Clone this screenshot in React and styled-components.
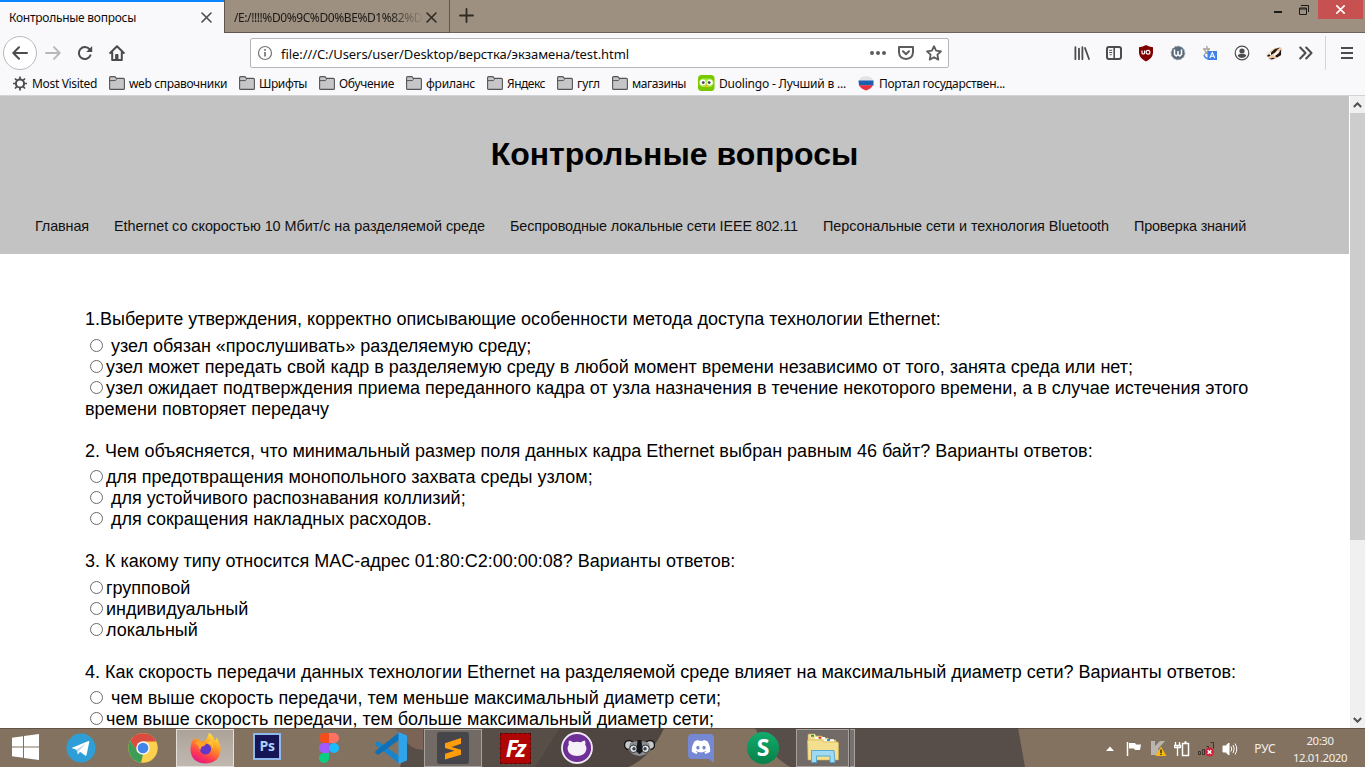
import React from 'react';
import styled, { createGlobalStyle, css } from 'styled-components';
import { FaDiscord } from 'react-icons/fa';

const GlobalStyle = createGlobalStyle`
  * { box-sizing: border-box; }
  body { margin: 0; overflow: hidden; }
`;

const UI = '"Noto Sans", "Open Sans", sans-serif';
const ARIAL = '"Liberation Sans", Arial, sans-serif';

const Desktop = styled.div`
  width: 1365px; height: 767px; display: flex; flex-direction: column;
  overflow: hidden; background: #fff; font-family: ${UI}; font-size: 12px; color: #0c0c0d;
`;
const Text = styled.span`
  white-space: pre; letter-spacing: ${p => p.$ls || 0}px;
`;

/* ---------- tab strip ---------- */
const TabStrip = styled.header`
  height: 33px; flex: none; display: flex; background: #9e9081;
`;
const ActiveTab = styled.div`
  width: 224px; height: 33px; border-top: 2px solid #0a84ff; background: #f9f9fb;
  display: flex; align-items: center; justify-content: space-between; padding: 0 12px 1px 9px;
`;
const Tab = styled.div`
  width: 226px; height: 33px; border: solid #5f564d; border-width: 0 1px 1px 1px;
  display: flex; align-items: center; justify-content: space-between; padding: 2px 12px 0 9px;
  color: #1c1916;
`;
const FadedTitle = styled(Text)`
  width: 190px;
  mask-image: linear-gradient(90deg, #000 155px, transparent 190px);
`;
const StripRest = styled.div`
  flex: 1; display: flex; justify-content: space-between; border-bottom: 1px solid #6b6258;
  padding-left: 9px;
`;
const NewTab = styled.div`display: flex; align-items: center; padding-bottom: 1px;`;
const WindowButtons = styled.div`display: flex; height: 19px; padding-right: 2px;`;
const MinMax = styled.div`
  width: 26px; height: 19px; display: flex; align-items: center; justify-content: center;
`;
const CloseWindow = styled.div`
  width: 45px; height: 19px; margin-left: 1px; background: #c75050;
  display: flex; align-items: center; justify-content: center;
`;

/* ---------- navigation bar ---------- */
const NavBar = styled.div`
  height: 40px; flex: none; display: flex; align-items: center; background: #f9f9fb; padding-left: 3px;
`;
const BackButton = styled.div`
  width: 34px; height: 34px; border: 1px solid #b9b9bd; border-radius: 50%; background: #fff;
  display: flex; align-items: center; justify-content: center;
`;
const NavButton = styled.div`
  width: 32px; height: 32px; display: flex; align-items: center; justify-content: center;
`;
const UrlBar = styled.div`
  width: 699px; height: 30px; margin-left: 117px; border: 1px solid #b6b6ba; border-radius: 2px;
  background: #fff; display: flex; align-items: center; font-size: 13px;
  padding: 0 6px 0 6px; gap: 8px;
`;
const UrlText = styled.div`flex: 1; padding-top: 2px;`;
const UrlActions = styled.div`display: flex; align-items: center; gap: 12px;`;
const Extensions = styled.div`display: flex; align-items: center; margin-left: 117px;`;
const MenuButton = styled(NavButton)`
  width: 40px; height: 34px; border-left: 1px solid #d5d5d9; margin-left: 3px; padding-left: 3px;
`;

/* ---------- bookmarks ---------- */
const Bookmarks = styled.div`
  height: 23px; flex: none; display: flex; align-items: center; background: #f9f9fb;
  border-bottom: 1px solid #d3d3d6; padding-left: 12px; padding-bottom: 2px;
`;
const Bookmark = styled.div`
  width: ${p => p.$w}px; display: flex; align-items: center; gap: 4px;
`;

/* ---------- page ---------- */
const Viewport = styled.div`flex: none; height: 632px; display: flex; overflow: hidden;`;
const Page = styled.div`width: 1349px; height: 632px; overflow: hidden; font-family: ${ARIAL}; color: #000;`;
const PageHeader = styled.div`height: 158px; background: #c3c3c3; padding-top: 40px;`;
const Title = styled.h1`
  margin: 0; height: 37px; line-height: 37px; font-size: 32px; text-align: center; font-weight: 700;
`;
const Menu = styled.nav`
  display: flex; gap: 25px; padding: 45px 0 0 35px; font-size: 14.4px; line-height: 17px; color: #111;
`;
const Quiz = styled.main`padding: 55px 85px 0 85px; font-size: 18px; line-height: 21px;`;
const Block = styled.section`margin-bottom: 21px;`;
const Question = styled.div`margin-bottom: 5.6px;`;
const Answer = styled.label`display: block; white-space: pre-line;`;
const Radio = styled.input`
  appearance: none; width: 13px; height: 13px; margin: 0 3px 0 5px; vertical-align: 0;
  border: 1px solid #6a6a6a; border-radius: 50%; background: #fff;
`;
const ScrollBar = styled.div`
  width: 16px; height: 632px; background: #f0f0f0; border-left: 1px solid #fff;
  display: flex; flex-direction: column; align-items: center; justify-content: space-between;
`;
const ScrollArrow = styled.div`height: 17px; display: flex; align-items: center; justify-content: center;`;
const Thumb = styled.div`width: 15px; height: 427px; background: #cdcdcd;`;
const Track = styled.div`flex: 1;`;

/* ---------- taskbar ---------- */
const TaskBar = styled.footer`
  position: relative; flex: none; height: 39px; display: flex; justify-content: space-between;
  background: #837260; color: #fff;
`;
const Wallpaper = styled.svg`position: absolute; left: 0; top: 0; width: 1365px; height: 39px;`;
const TaskGroup = styled.div`position: relative; display: flex; padding-top: 1px;`;
const StartButton = styled.div`width: 52px; display: flex; align-items: center; padding: 0 0 2px 12px;`;
const Task = styled.div`
  width: ${p => p.$w || 58}px; height: 38px; margin-right: ${p => (p.$w ? 0 : 4)}px;
  display: flex; align-items: center; justify-content: center;
  ${p => p.$state === 'active' && css`background: linear-gradient(#aca298, #c0b8b0); border: 1px solid #e3dfdb;`}
  ${p => p.$state === 'open' && css`background: rgba(255,255,255,.16); border: 1px solid rgba(255,255,255,.38);`}
`;
const TaskStack = styled.div`
  width: 5px; height: 38px; background: rgba(255,255,255,.2);
  border: solid rgba(255,255,255,.35); border-width: 1px 1px 1px 0; margin-left: 1px;
`;
const Tray = styled.div`position: relative; display: flex; align-items: center; padding-top: 2px;`;
const TrayIcon = styled.div`width: 24px; display: flex; justify-content: center;`;
const Language = styled.div`width: 46px; text-align: center; color: #f2efec;`;
const Clock = styled.div`
  width: 60px; margin: 0 15px 0 2px; text-align: center; font-size: 11.4px; line-height: 17px; color: #f2efec;
`;

const G = '#4c4c4f';
const X = ({ c = G, s = 11, w = 1.6 }) => (
  <svg width={s} height={s} viewBox="0 0 11 11"><path d="M1 1l9 9M10 1l-9 9" stroke={c} strokeWidth={w} strokeLinecap="round" /></svg>
);
const Folder = () => (
  <svg width="16" height="14" viewBox="0 0 16 14"><path d="M.6 12.4V1.6q0-1 1-1h4.2l1.6 1.8h7q1 0 1 1v9q0 1-1 1H1.6q-1 0-1-1z" fill="#c6c6c8" stroke="#555557" strokeWidth="1.1" /><path d="M1 4.6h5.2l1.4-1.2" fill="none" stroke="#555557" /></svg>
);
const Gear = () => (
  <svg width="16" height="15" viewBox="-.5 0 16 15" fill="none" stroke={G}><circle cx="7.5" cy="7.5" r="4.1" strokeWidth="2" /><path d="M7.5 .5v2.4M7.5 12v2.5M.5 7.5h2.4M12 7.5h2.500M2.500 2.500l1.800 1.800M10.700 10.700l1.800 1.800M12.500 2.500l-1.800 1.800M4.300 10.700l-1.800 1.800" strokeWidth="1.7" /></svg>
);
const Duo = () => (
  <svg width="17" height="16" viewBox="0 0 17 16"><rect width="16.5" height="16" rx="3.5" fill="#78c800" /><rect x="1" y="3.5" width="14.5" height="8.500" rx="4.2" fill="#a5ed3c" /><circle cx="4.8" cy="7.6" r="3" fill="#fff" /><circle cx="11.7" cy="7.6" r="3" fill="#fff" /><circle cx="5.3" cy="7.6" r="1.4" fill="#444" /><circle cx="11.2" cy="7.6" r="1.4" fill="#444" /><path d="M6.4 10.2h3.8l-1.9 2.5z" fill="#ffb000" /></svg>
);
const Gos = () => (
  <svg width="17" height="16" viewBox="0 0 17 16"><path d="M2 3Q8-1 14 3l1 3H1z" fill="#e3e3e7" /><path d="M.5 5.500h15v5H1z" fill="#1d5fae" /><path d="M1 10.300h14Q13 14 8 15.500 3 14 1 10.300z" fill="#e8303f" /></svg>
);

const Library = () => (
  <svg width="16" height="16" viewBox="0 0 16 16" stroke={G} strokeWidth="1.8" strokeLinecap="round"><path d="M1.4 2.2v12M5 3.6v10.6M8.400 2.200v12M11 3l4 11" /></svg>
);
const Sidebar = () => (
  <svg width="16" height="14" viewBox="0 0 16 14" fill="none" stroke={G}><rect x="1" y="1" width="14" height="12" rx="2" strokeWidth="2" /><path d="M8.200 1v12" strokeWidth="1.600" /><path d="M3.200 4.300h3M3.200 6.500h3M3.700 8.700h2" /></svg>
);
const Shield = () => (
  <svg width="16" height="17" viewBox="0 0 16 17"><path d="M8 0q3 2 7 2.200V8q-.6 5.500-7 8.500Q1.600 13.500 1 8V2.200Q5 2 8 0z" fill="#800000" /><path d="M4 5.500v2.200q0 1.300 1.300 1.300T6.600 7.700V5.500" fill="none" stroke="#fff" strokeWidth="1.200" /><circle cx="10" cy="7.300" r="1.900" fill="none" stroke="#fff" strokeWidth="1.200" /></svg>
);
const Wappa = () => (
  <svg width="16" height="16" viewBox="0 0 16 16"><circle cx="8" cy="8" r="6.800" fill="#5b6b7c" stroke="#8a96a3" strokeDasharray="2 1.500" /><path d="M4.500 4.500v5l1.700 1.600L8 9.500l1.800 1.600 1.700-1.600v-5M8 6v3.500" fill="none" stroke="#fff" strokeWidth="1.500" /></svg>
);
const Translate = () => (
  <svg width="16" height="16" viewBox="0 0 16 16"><path d="M1 4h7M4.500 1l.8 2M2 9.500Q6 7.500 6.500 4M2.500 5Q4 8 6 9" fill="none" stroke="#a39f93" strokeWidth="1.300" /><path d="M2 10q1 3.500 4 3.500" fill="none" stroke="#4a86e8" strokeWidth="1.500" /><rect x="5.500" y="6" width="9.500" height="9" fill="#3f80ea" /><path d="M7.800 13l2.500-5.500 2.500 5.500M8.700 11.300h3.200" fill="none" stroke="#fff" strokeWidth="1.100" /></svg>
);
const Account = () => (
  <svg width="16" height="16" viewBox="0 0 16 16"><circle cx="8" cy="8" r="6.800" fill="none" stroke={G} strokeWidth="1.200" /><circle cx="8" cy="6" r="2.600" fill={G} /><path d="M3.800 11q0-2 2.200-2h4q2.200 0 2.200 2Q10.500 13 8 13t-4.200-2z" fill={G} /></svg>
);
const Badger = () => (
  <svg width="17" height="15" viewBox="0 0 17 15"><path d="M.5 9L5 4.500 9 2l6-.8 1 2.300L15 9.500 9 13 3 13z" fill="#f0c9a3" /><path d="M3 7.500L8 4l3 0-4 4-4 3z" fill="#fff" /><path d="M5 6.500L9 3l5-1.500-2.500 2L9 6.500 5 9zM9 10l3.500-2.500 2.500-4 0 5.500-4 2.500zM1 9.800l2.500-1.500 1.200 1.500-2.700 1zM3 13l4-1.200 2 .7-3 1z" fill="#1b1715" /><path d="M8 9.500l4.500-4" stroke="#fff" strokeWidth="1.500" /></svg>
);
const Chevrons = () => (
  <svg width="14" height="14" viewBox="0 0 14 14" fill="none" stroke={G} strokeWidth="2"><path d="M1.200 1.500L6.500 7l-5.300 5.500M7.200 1.500L12.500 7l-5.300 5.500" strokeLinecap="round" strokeLinejoin="round" /></svg>
);

const Windows = () => (
  <svg width="27" height="26" viewBox="0 0 27 26" fill="#fff"><path d="M0 3.700l11-1.500v10.200H0zM12 2L27 0v12.400H12zM0 13.500h11v10.300L0 22.200zM12 13.500h15V26l-15-2.100z" /></svg>
);
const Telegram = () => (
  <svg width="30" height="30" viewBox="0 0 30 30"><circle cx="15" cy="15" r="14.500" fill="#2d9fd6" /><path d="M5.500 15L22.500 8q1-.2.800 1L20.500 22q-.4 1-1.400.4L14 18.800 12 21.500l-1.500-4.700z" fill="#fff" /><path d="M10.500 16.800L20 10.500l-7.500 7.700-.5 3.300z" fill="#b9d3e3" /></svg>
);
const Chrome = () => (
  <svg width="30" height="30" viewBox="0 0 30 30"><circle cx="15" cy="15" r="14.700" fill="#fbd04d" /><path d="M2.300 7.600A14.700 14.700 0 0 1 28.200 8.500H15L8.600 18z" fill="#d94c3f" /><path d="M2.300 7.600L9.500 19 15 21.500 13 29.600A14.700 14.700 0 0 1 2.300 7.600z" fill="#3d9c55" /><circle cx="15" cy="15" r="6.800" fill="#f5f5f5" /><circle cx="15" cy="15" r="5.300" fill="#4285ea" /></svg>
);
const Firefox = () => (
  <svg width="31" height="32" viewBox="0 0 31 32"><defs><linearGradient id="ff" x1=".8" y1="0" x2=".3" y2="1"><stop offset="0" stopColor="#fff04a" /><stop offset=".4" stopColor="#ff9a1f" /><stop offset=".75" stopColor="#ff3b4f" /><stop offset="1" stopColor="#e31587" /></linearGradient></defs><path d="M19 .5q5 4 5.500 8 1.700-.2 2-3 4.500 7 4 12.500-1 13-15 13.500Q1.500 31 .5 18 .4 10.500 4.500 5.500l.5 3q2-2 3-2l1.500 2.500q2.500 0 4 .5Q18 6 19 .5z" fill="url(#ff)" /><circle cx="15.500" cy="17" r="5.600" fill="#6338c8" /><path d="M5 11q4-3 7.500-.5 2 .5 4 1-1.500 2.500-4.500 3-1.500 1-1.500 3.500-2-1.500-2-4z" fill="#ffa228" /><path d="M17 11q5 0 6 6 1-4-2-8z" fill="#ffc93a" /></svg>
);
const PsBox = styled.div`
  width: 28px; height: 27px; border: 2px solid #8fb9ea; background: #161656; color: #a9d1ff;
  font: 700 14px/22px "Open Sans", sans-serif; text-align: center; margin-top: -4px; letter-spacing: -.3px;
`;
const Figma = () => (
  <svg width="20" height="30" viewBox="0 0 20 30"><path d="M5 0h5v10H5A5 5 0 0 1 5 0z" fill="#f24e1e" /><path d="M10 0h5a5 5 0 0 1 0 10h-5z" fill="#ff7262" /><path d="M5 10h5v10H5a5 5 0 0 1 0-10z" fill="#a259ff" /><circle cx="15" cy="15" r="5" fill="#1abcfe" /><path d="M5 20h5v5a5 5 0 1 1-5-5z" fill="#0acf83" /></svg>
);
const VsCode = () => (
  <svg width="32" height="32" viewBox="0 0 32 32"><path d="M0 11.500q0-.5 3-2.500L24 24v7.500L.500 13z" fill="#1a84ca" /><path d="M0 20.500L3 23 24 8V.5L.500 19z" fill="#0f70b5" /><path d="M23.500 0L32 3.500v25L23.500 32z" fill="#2fa4ea" /></svg>
);
const Sublime = () => (
  <svg width="32" height="32" viewBox="0 0 32 32"><rect width="32" height="32" rx="2.500" fill="#46464a" /><path d="M8 11.200L24 6v5.800L14.500 15 24 17.800v5L8 27.500v-5.700l9.500-3L8 16z" fill="#ff9d0a" /></svg>
);
const FzBox = styled.div`
  width: 31px; height: 31px; background: #b00505; border: 1px dashed #5c0808; color: #fff;
  font: italic 700 23px/28px "Open Sans", sans-serif; text-align: center; letter-spacing: -2px;
`;
const GitHubDesk = () => (
  <svg width="32" height="32" viewBox="0 0 32 32"><circle cx="16" cy="16" r="15" fill="#6e2f96" stroke="#f1eaf5" strokeWidth="1.800" /><path d="M8 8.500q2 .2 4 1.700 4-.8 8 0 2-1.500 4-1.700.8 2.500.2 4.300 1.500 2 1.200 4.500Q24.500 24 16 24T6.600 17.300q-.3-2.500 1.200-4.500Q7.200 11 8 8.500z" fill="#f5f0f8" /></svg>
);
const Koala = () => (
  <svg width="31" height="18" viewBox="0 0 31 18"><ellipse cx="5" cy="6" rx="4.500" ry="4.500" fill="#c9c9c9" stroke="#161616" strokeWidth="1.400" /><ellipse cx="26" cy="6" rx="4.500" ry="4.500" fill="#c9c9c9" stroke="#161616" strokeWidth="1.400" /><path d="M6 4q9-4 19 0l1.500 7q-4 5-11 6-8-1-11-6z" fill="#8a8f94" /><circle cx="9.500" cy="9.800" r="3.800" fill="#dfe4e8" stroke="#333" /><circle cx="21.500" cy="9.800" r="3.800" fill="#dfe4e8" stroke="#333" /><circle cx="10" cy="9.800" r="1.700" fill="#39424a" /><circle cx="21" cy="9.800" r="1.700" fill="#39424a" /><path d="M13.500 1h4l1 11q-3 6-6 0z" fill="#15171a" /></svg>
);
const DiscordTile = styled.div`
  position: relative; width: 26px; height: 25px; border-radius: 4px 4px 0 4px; background: #7688d4; color: #fff;
  display: flex; align-items: center; justify-content: center; font-size: 20px; margin-top: -3px;
  &::after { content: ''; position: absolute; right: 0; bottom: -4px; border-left: 5px solid transparent; border-top: 4px solid #7688d4; }
`;
const SBadge = styled.div`
  width: 32px; height: 32px; border-radius: 50%; background: linear-gradient(#12ab6d, #078049); color: #fff;
  font: 700 23px/31px "Noto Sans", sans-serif; text-align: center;
`;
const Explorer = () => (
  <svg width="32" height="30" viewBox="0 0 32 30"><path d="M1 6V2q0-1 1-1h6l1 2h6l1 2h5l1 2h7v4H1z" fill="#f3dd8a" stroke="#c9a94c" strokeWidth=".6" /><path d="M3.500 1.800h4v2h-4zM8 4h10v2H8zM17 6.200h10v2H17z" fill="#fff" /><path d="M4 1.800h3v2H4z" fill="#20a53a" /><path d="M11.500 3.800h3v2h-3z" fill="#d83b2a" /><path d="M20 6h3v2h-3z" fill="#2c93d1" /><path d="M.5 7h14l2 2H31l.5 1v17H1z" fill="#f4df8f" stroke="#cfb155" strokeWidth=".6" /><path d="M4.500 17.500h22.500l1 12h-5V23H9.500v6.500h-5z" fill="#9fdaf2" stroke="#4ba6d2" strokeWidth=".9" /></svg>
);

const BOOKMARKS = [
  { t: 'Most Visited', w: 97, ls: -0.33, icon: <Gear /> },
  { t: 'web справочники', w: 130, ls: -0.357 },
  { t: 'Шрифты', w: 80, ls: -0.43 },
  { t: 'Обучение', w: 87, ls: -0.27 },
  { t: 'фриланс', w: 81, ls: -0.228 },
  { t: 'Яндекс', w: 70, ls: -0.49 },
  { t: 'гугл', w: 55, ls: -0.078 },
  { t: 'магазины', w: 86, ls: -0.45 },
  { t: 'Duolingo - Лучший в ...', w: 160, ls: -0.202, icon: <Duo /> },
  { t: 'Портал государствен...', w: 160, ls: -0.289, icon: <Gos /> },
];
const MENU = [
  ['Главная', -0.112], ['Ethernet со скоростью 10 Мбит/с на разделяемой среде', -0.038],
  ['Беспроводные локальные сети IEEE 802.11', -0.122],
  ['Персональные сети и технология Bluetooth', -0.066], ['Проверка знаний', -0.202],
];
const QUIZ = [
  { q: '1.Выберите утверждения, корректно описывающие особенности метода доступа технологии Ethernet:', a: [
    [' узел обязан «прослушивать» разделяемую среду;'],
    ['узел может передать свой кадр в разделяемую среду в любой момент времени независимо от того, занята среда или нет;'],
    ['узел ожидает подтверждения приема переданного кадра от узла назначения в течение некоторого времени, а в случае истечения этого', 'времени повторяет передачу']] },
  { q: '2. Чем объясняется, что минимальный размер поля данных кадра Ethernet выбран равным 46 байт? Варианты ответов:', a: [
    ['для предотвращения монопольного захвата среды узлом;'],
    [' для устойчивого распознавания коллизий;'],
    [' для сокращения накладных расходов.']] },
  { q: '3. К какому типу относится MAC-адрес 01:80:C2:00:00:08? Варианты ответов:', a: [
    ['групповой'], ['индивидуальный'], ['локальный']] },
  { q: '4. Как скорость передачи данных технологии Ethernet на разделяемой среде влияет на максимальный диаметр сети? Варианты ответов:', a: [
    [' чем выше скорость передачи, тем меньше максимальный диаметр сети;'],
    ['чем выше скорость передачи, тем больше максимальный диаметр сети;']] },
];

export default function App() {
  return (
    <Desktop>
      <GlobalStyle />
      <TabStrip>
        <ActiveTab><Text $ls={-0.272}>Контрольные вопросы</Text><X /></ActiveTab>
        <Tab><FadedTitle $ls={-0.42}>/E:/!!!!%D0%9C%D0%BE%D1%82%D</FadedTitle><X c="#2e2a26" /></Tab>
        <StripRest>
          <NewTab><svg width="15" height="15" viewBox="0 0 15 15"><path d="M7.500 1v13M1 7.500h13" stroke="#2e2a26" strokeWidth="1.800" strokeLinecap="round" /></svg></NewTab>
          <WindowButtons>
            <MinMax><svg width="8" height="11"><path d="M0 8h8" stroke="#1c1a17" strokeWidth="2" /></svg></MinMax>
            <MinMax><svg width="10" height="10" viewBox="0 0 10 10" fill="none" stroke="#1c1a17"><path d="M2 .5h7.500V7" /><path d="M.5 3h7v6.500h-7zM.5 4h7" /></svg></MinMax>
            <CloseWindow><X c="#fff" s={9} w={2} /></CloseWindow>
          </WindowButtons>
        </StripRest>
      </TabStrip>
      <NavBar>
        <BackButton><svg width="16" height="14" viewBox="0 0 16 14" fill="none" stroke={G} strokeWidth="2" strokeLinecap="round" strokeLinejoin="round"><path d="M15 7H1.500M7 1.200L1.300 7 7 12.800" /></svg></BackButton>
        <NavButton><svg width="16" height="14" viewBox="0 0 16 14" fill="none" stroke="#b8b8bb" strokeWidth="1.900" strokeLinecap="round" strokeLinejoin="round"><path d="M1 7h13.500M9 1.200L14.700 7 9 12.800" /></svg></NavButton>
        <NavButton><svg width="16" height="16" viewBox="0 0 16 16" fill="none" stroke={G} strokeWidth="2"><path d="M13.400 10.300A6 6 0 1 1 12.500 4.200" strokeLinecap="round" /><path d="M15.200 1v6H9.200z" fill={G} stroke="none" /></svg></NavButton>
        <NavButton><svg width="16" height="16" viewBox="0 0 16 16" fill="none" stroke={G} strokeWidth="2" strokeLinejoin="round" strokeLinecap="round"><path d="M1.200 8L8 1.300 14.800 8M3.200 7.500V15h9.600V7.500" /><path d="M7 9.500h2V14H7z" fill={G} strokeWidth="1" /></svg></NavButton>
        <UrlBar>
          <svg width="16" height="16" viewBox="0 0 16 16" fill="none" stroke="#737376"><circle cx="8" cy="8" r="6.500" strokeWidth="1.200" /><path d="M8 7v4.500M8 4v1.700" strokeWidth="1.700" /></svg>
          <UrlText><Text $ls={-0.072}>file:///C:/Users/user/Desktop/верстка/экзамена/test.html</Text></UrlText>
          <UrlActions>
            <svg width="16" height="4" viewBox="0 0 16 4" fill="#5c5c5f"><circle cx="2" cy="2" r="2" /><circle cx="8" cy="2" r="2" /><circle cx="14" cy="2" r="2" /></svg>
            <svg width="16" height="14" viewBox="0 0 16 14" fill="none" stroke="#5c5c5f" strokeWidth="2" strokeLinejoin="round" strokeLinecap="round"><path d="M1 1h14v5.500Q14.500 12.500 8 13 1.500 12.500 1 6.500z" /><path d="M5 5.200l3 3 3-3" /></svg>
            <svg width="16" height="16" viewBox="0 0 16 16" fill="none" stroke="#5c5c5f" strokeWidth="1.800" strokeLinejoin="round"><path d="M8 1.200l2.100 4.500 4.900.6-3.600 3.400.9 4.900L8 12.200l-4.300 2.400.9-4.900L1 6.300l4.900-.6z" /></svg>
          </UrlActions>
        </UrlBar>
        <Extensions>
          {[Library, Sidebar, Shield, Wappa, Translate, Account, Badger, Chevrons].map((I, i) => <NavButton key={i}><I /></NavButton>)}
          <MenuButton><svg width="12" height="12" viewBox="0 0 12 12"><path d="M0 1h12M0 6h12M0 11h12" stroke={G} strokeWidth="2" /></svg></MenuButton>
        </Extensions>
      </NavBar>
      <Bookmarks>
        {BOOKMARKS.map(b => <Bookmark key={b.t} $w={b.w}>{b.icon || <Folder />}<Text $ls={b.ls}>{b.t}</Text></Bookmark>)}
      </Bookmarks>
      <Viewport>
        <Page>
          <PageHeader>
            <Title>Контрольные вопросы</Title>
            <Menu>{MENU.map(([t, ls]) => <Text key={t} $ls={ls}>{t}</Text>)}</Menu>
          </PageHeader>
          <Quiz>
            {QUIZ.map(({ q, a }) => (
              <Block key={q}>
                <Question><Text>{q}</Text></Question>
                {a.map(([t, rest]) => (
                  <Answer key={t}><Radio type="radio" /><Text>{t}</Text>{rest && <><br /><Text>{rest}</Text></>}</Answer>
                ))}
              </Block>
            ))}
          </Quiz>
        </Page>
        <ScrollBar>
          <ScrollArrow><svg width="9" height="6" viewBox="0 0 9 6"><path d="M.8 5l3.700-3.700L8.200 5" fill="none" stroke="#505050" strokeWidth="2" /></svg></ScrollArrow>
          <Thumb /><Track />
          <ScrollArrow><svg width="9" height="6" viewBox="0 0 9 6"><path d="M.8 1l3.700 3.700L8.200 1" fill="none" stroke="#505050" strokeWidth="2" /></svg></ScrollArrow>
        </ScrollBar>
      </Viewport>
      <TaskBar>
        <Wallpaper viewBox="0 0 1365 39">
          <path d="M400 39L410 0H664Q650 30 628 39z" fill="#574e48" />
          <path d="M395 0h28v22q-12 0-20-12z" fill="#7b6355" />
          <path d="M535 39L560 0H664Q650 30 628 39z" fill="#504641" />
          <path d="M755 0q12 25 35 39H1025L1018 0z" fill="#574e4a" />
          <path d="M0 .5h1365" stroke="#4a3f35" strokeOpacity=".6" />
        </Wallpaper>
        <TaskGroup>
          <StartButton><Windows /></StartButton>
          <Task><Telegram /></Task>
          <Task><Chrome /></Task>
          <Task $state="active"><Firefox /></Task>
          <Task><PsBox>Ps</PsBox></Task>
          <Task><Figma /></Task>
          <Task><VsCode /></Task>
          <Task $state="open"><Sublime /></Task>
          <Task><FzBox>Fz</FzBox></Task>
          <Task><GitHubDesk /></Task>
          <Task><Koala /></Task>
          <Task><DiscordTile><FaDiscord /></DiscordTile></Task>
          <Task><SBadge>S</SBadge></Task>
          <Task $w={53} $state="open"><Explorer /></Task>
          <TaskStack />
        </TaskGroup>
        <Tray>
          <TrayIcon><svg width="8" height="5"><path d="M0 5l4-4.500L8 5z" fill="#fff" /></svg></TrayIcon>
          <TrayIcon><svg width="16" height="16" viewBox="0 0 16 16"><path d="M1.500 1v14" stroke="#fff" strokeWidth="1.500" /><path d="M3 2h6l1 1.500h5L14 9H9L8 7.500H3z" fill="#fff" /></svg></TrayIcon>
          <TrayIcon><svg width="17" height="17" viewBox="0 0 17 17"><path d="M1 1h4v5l5-5h5L8 9l4 6H1z" fill="#b9b4ae" /><path d="M11 6.500l5.500 9.500h-11z" fill="#f8b90e" /><path d="M11 9.500v3.500M11 13.800v1.200" stroke="#222" strokeWidth="1.300" /></svg></TrayIcon>
          <TrayIcon><svg width="16" height="16" viewBox="0 0 16 16" fill="none" stroke="#fff"><path d="M3.500 5v10M1.500 1v3M5.500 1v3M.5 4.500h6v2h-6z" strokeWidth="1.300" /><path d="M8.500 2.500h6v12h-6zM10.500 1h2" strokeWidth="1.500" /></svg></TrayIcon>
          <TrayIcon><svg width="17" height="16" viewBox="0 0 17 16"><path d="M.5 10.500h2v3h-2zM4.500 8.500h2v5h-2zM8.500 5.500h2v5M12.500 1.500h3v6" fill="none" stroke="#3b332c" /><circle cx="11.500" cy="11" r="4.500" fill="#d6203a" /><path d="M9.700 9.200l3.600 3.600M13.300 9.200l-3.600 3.600" stroke="#fff" strokeWidth="1.500" /></svg></TrayIcon>
          <TrayIcon><svg width="16" height="16" viewBox="0 0 16 16" fill="none" stroke="#fff"><path d="M1 5h2.500L7 2v12l-3.500-3H1z" fill="#fff" /><path d="M9 5.500q1.500 2.500 0 5M11 4q2.500 4 0 8M13 2.500q3.500 5.500 0 11" /></svg></TrayIcon>
          <Language>РУС</Language>
          <Clock><Text $ls={-0.4}>20:30</Text><br /><Text $ls={-0.43}>12.01.2020</Text></Clock>
        </Tray>
      </TaskBar>
    </Desktop>
  );
}
